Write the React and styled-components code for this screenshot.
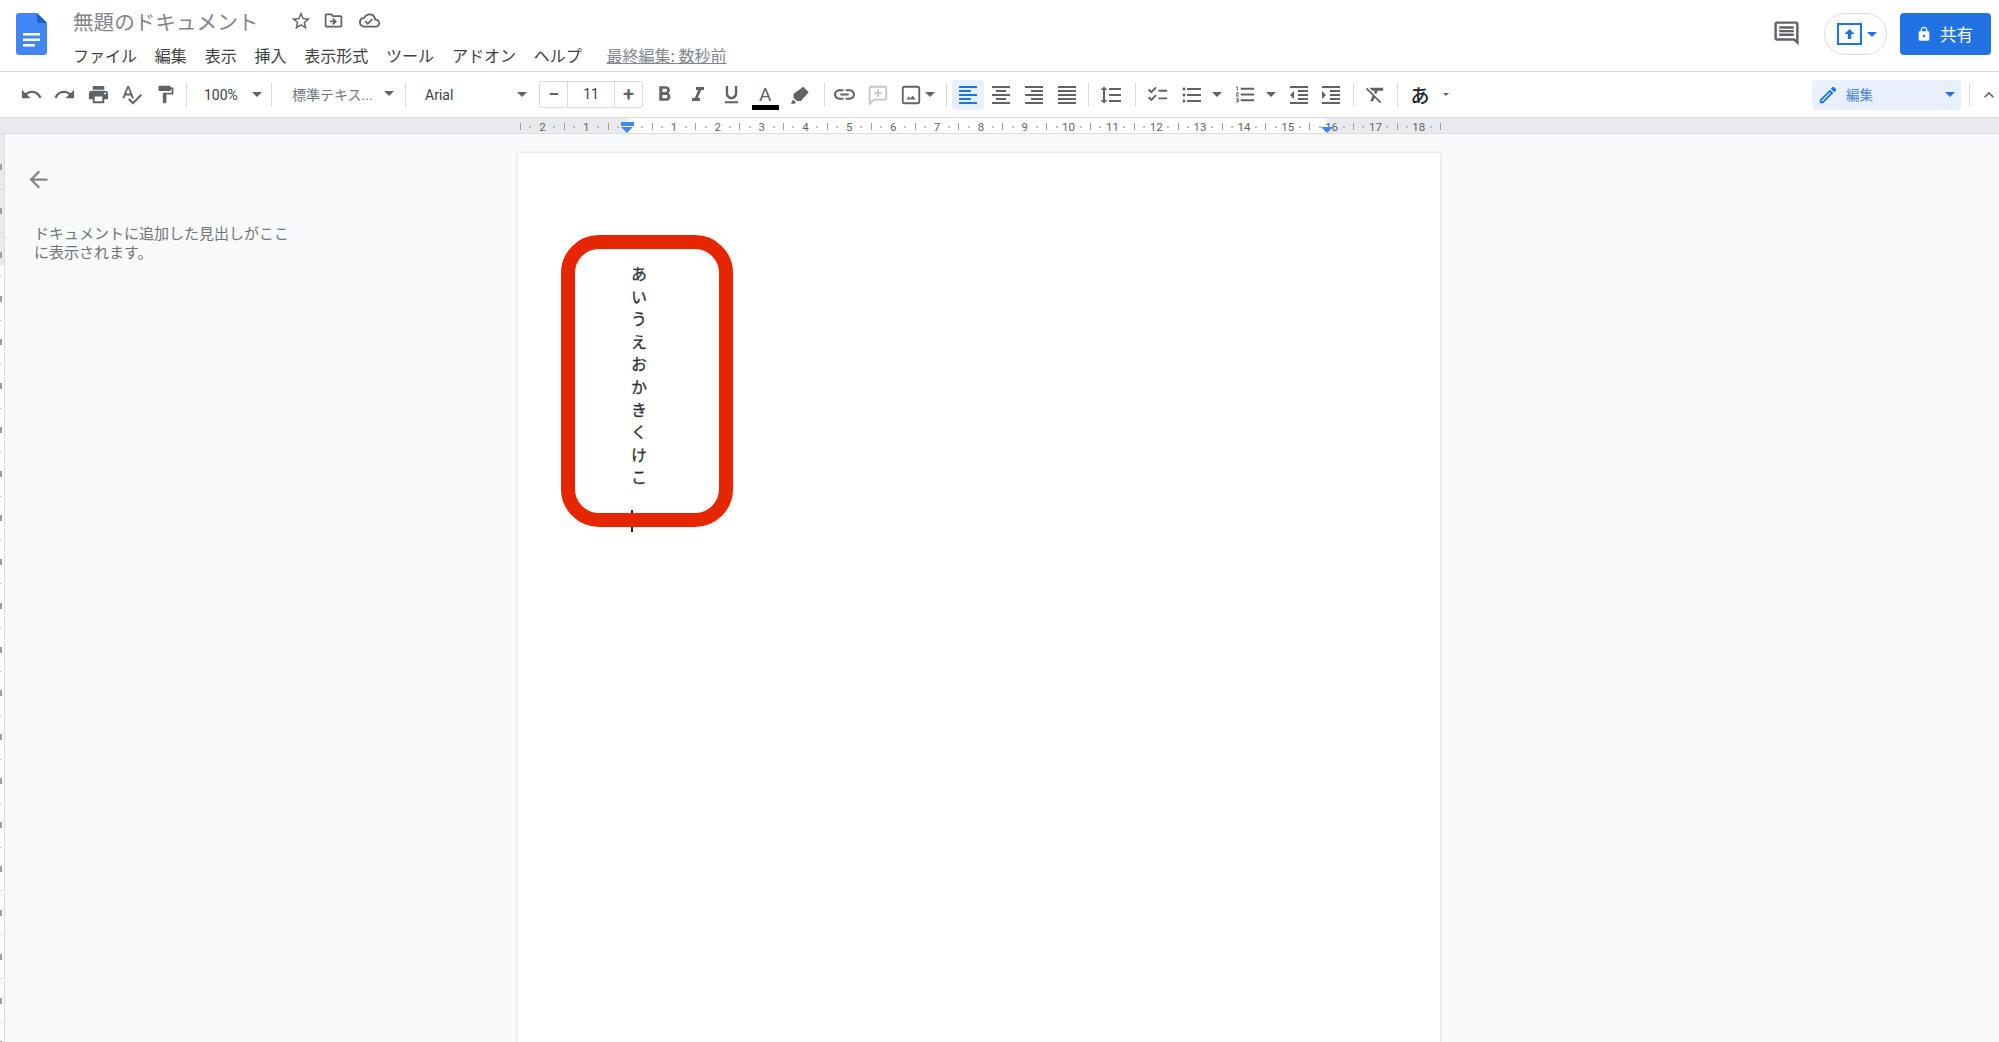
import styled, { createGlobalStyle } from "styled-components";
import {
  MdArrowBack,
  MdChecklist,
  MdExpandLess,
  MdFormatAlignCenter,
  MdFormatAlignJustify,
  MdFormatAlignLeft,
  MdFormatAlignRight,
  MdFormatBold,
  MdFormatClear,
  MdFormatIndentDecrease,
  MdFormatIndentIncrease,
  MdFormatItalic,
  MdFormatLineSpacing,
  MdFormatListBulleted,
  MdFormatListNumbered,
  MdFormatPaint,
  MdFormatUnderlined,
  MdLink,
  MdLock,
  MdOutlineCloudDone,
  MdOutlineComment,
  MdOutlineDriveFileMove,
  MdOutlineEdit,
  MdPrint,
  MdRedo,
  MdSpellcheck,
  MdStarBorder,
  MdUndo,
} from "react-icons/md";

const CJK = `"Noto Sans CJK JP", "Noto Sans", sans-serif`;
const menuItems = ["ファイル", "編集", "表示", "挿入", "表示形式", "ツール", "アドオン", "ヘルプ"];
const kana = "あいうえおかきくけこ";
const cells = Array.from({ length: 21 }, (_, i) => i - 2);
const sideTicks = Array.from({ length: 42 }, (_, i) => i);

export default function App() {
  return (
    <Screen>
      <GlobalStyle />
      <Header>
        <DocsLogo viewBox="0 0 31 42">
          <path d="M3 0h18l10 10v29a3 3 0 0 1-3 3H3a3 3 0 0 1-3-3V3a3 3 0 0 1 3-3z" fill="#4285f4" />
          <path d="M21 0l10 10h-7.500a2.500 2.500 0 0 1-2.500-2.500z" fill="#1a5fc8" />
          <path d="M7 20h17v2.500H7zM7 25.500h17V28H7zM7 31h12v2.500H7z" fill="#fff" />
        </DocsLogo>
        <TitleColumn>
          <TitleRow>
            <Title>無題のドキュメント</Title>
            <TitleIcon $w={33} $ml={26}><MdStarBorder size={22} /></TitleIcon>
            <TitleIcon $w={33}><MdOutlineDriveFileMove size={21} /></TitleIcon>
            <TitleIcon $w={38}><MdOutlineCloudDone size={21} /></TitleIcon>
          </TitleRow>
          <MenuRow>
            {menuItems.map((item) => (
              <MenuItem key={item}>{item}</MenuItem>
            ))}
            <LastEdit>最終編集: 数秒前</LastEdit>
          </MenuRow>
        </TitleColumn>
        <HeaderActions>
          <CommentIcon><MdOutlineComment size={29} /></CommentIcon>
          <PresentPill>
            <svg width="28" height="24" viewBox="0 0 28 24">
              <rect x="2" y="2" width="23" height="20" fill="none" stroke="#1a73e8" strokeWidth="2" />
              <path d="M13.500 7l5 5h-3.300v5h-3.400v-5H8.500z" fill="#1a73e8" />
            </svg>
            <Caret $color="#1a73e8" />
          </PresentPill>
          <ShareButton>
            <MdLock size={16} />
            共有
          </ShareButton>
        </HeaderActions>
      </Header>

      <Toolbar>
        <Tool><MdUndo size={23} /></Tool>
        <Tool><MdRedo size={23} /></Tool>
        <Tool><MdPrint size={23} /></Tool>
        <Tool><MdSpellcheck size={23} /></Tool>
        <Tool><MdFormatPaint size={21} /></Tool>
        <Sep $ml={4} />
        <Select $w={84} $pl={17} $pr={9}>100%<Caret /></Select>
        <Sep />
        <Select $w={133} $pl={20} $pr={11} $light>標準テキス...<Caret /></Select>
        <Sep />
        <Select $w={133} $pl={19} $pr={12}>Arial<Caret /></Select>
        <SizeBox>
          <SizeStep>−</SizeStep>
          <SizeValue>11</SizeValue>
          <SizeStep>+</SizeStep>
        </SizeBox>
        <Tool $w={33.5} $ml={5}><MdFormatBold size={25} /></Tool>
        <Tool $w={33.5}><MdFormatItalic size={24} /></Tool>
        <Tool $w={33.5}><MdFormatUnderlined size={23} /></Tool>
        <Tool $w={33.5}>
          <FontColor>A<ColorBar /></FontColor>
        </Tool>
        <Tool $w={36}>
          <svg width="22" height="22" viewBox="0 0 24 24" fill="currentColor">
            <path d="M15.500 3l6 6-8.500 9.500H8.500L5 15v-4.500z" />
            <path d="M4.500 17l3 3-1.500 1.500H2z" />
          </svg>
        </Tool>
        <Sep $ml={6} />
        <Tool $w={33} $ml={3}><MdLink size={25} /></Tool>
        <Tool $w={33} $faded>
          <svg width="22" height="22" viewBox="0 0 24 24" fill="none" stroke="currentColor" strokeWidth="2">
            <path d="M4 3h16a1 1 0 0 1 1 1v12a1 1 0 0 1-1 1H8l-5 4.500V4a1 1 0 0 1 1-1z" />
            <path d="M12 6v8M8 10h8" />
          </svg>
        </Tool>
        <Tool $w={33}>
          <svg width="22" height="22" viewBox="0 0 24 24">
            <rect x="3" y="3" width="18" height="18" rx="2" fill="none" stroke="currentColor" strokeWidth="2" />
            <path d="M7 17l2.500-3.500 2 2.500 2-3.500 3.500 4.500z" fill="currentColor" />
          </svg>
        </Tool>
        <Tool $w={6}><Caret /></Tool>
        <Sep $ml={13} />
        <Tool $w={32} $ml={5} $active><MdFormatAlignLeft size={24} /></Tool>
        <Tool $w={33}><MdFormatAlignCenter size={24} /></Tool>
        <Tool $w={33}><MdFormatAlignRight size={24} /></Tool>
        <Tool $w={33}><MdFormatAlignJustify size={24} /></Tool>
        <Sep $ml={5} />
        <Tool $w={44}><MdFormatLineSpacing size={24} /></Tool>
        <Sep $ml={2} />
        <Tool $w={42}><MdChecklist size={23} /></Tool>
        <Tool $w={28}><MdFormatListBulleted size={24} /></Tool>
        <Tool $w={22}><Caret /></Tool>
        <Tool $w={34}><MdFormatListNumbered size={23} /></Tool>
        <Tool $w={18}><Caret /></Tool>
        <Tool $w={38}><MdFormatIndentDecrease size={24} /></Tool>
        <Tool $w={26}><MdFormatIndentIncrease size={24} /></Tool>
        <Sep $ml={9} />
        <Tool $w={42}><MdFormatClear size={23} /></Tool>
        <Sep $ml={1} />
        <InputMode>あ</InputMode>
        <Tool $w={8}><Caret $small /></Tool>
        <EditMode>
          <MdOutlineEdit size={22} />
          <EditLabel>編集</EditLabel>
          <Caret $color="#1a73e8" />
        </EditMode>
        <Sep $ml={8} />
        <Collapse><MdExpandLess size={28} /></Collapse>
      </Toolbar>

      <Ruler>
        {cells.map((n) => (
          <RulerCell key={n}>
            <RulerDot />
            <RulerNumber>{n === 0 ? "" : Math.abs(n)}</RulerNumber>
            <RulerDot />
            {n === 0 && <IndentMarker />}
            {n === 16 && <RightMarker />}
          </RulerCell>
        ))}
      </Ruler>

      <Workspace>
        <SideRuler>
          {sideTicks.map((i) => (
            <SideCell key={i}>
              <SideTick $major={i % 2 === 0} />
            </SideCell>
          ))}
        </SideRuler>
        <Outline>
          <BackArrow><MdArrowBack size={27} /></BackArrow>
          <OutlineText>
            ドキュメントに追加した見出しがここ
            <br />
            に表示されます。
          </OutlineText>
        </Outline>
        <Page>
          <VerticalText>{kana}</VerticalText>
          <TextCursor />
          <RedFrame />
        </Page>
      </Workspace>
    </Screen>
  );
}

const GlobalStyle = createGlobalStyle`
  html, body {
    margin: 0;
    padding: 0;
    background: #fff;
  }
`;
const Screen = styled.div`
  width: 1999px;
  height: 1042px;
  overflow: hidden;
  display: flex;
  flex-direction: column;
  font-family: ${CJK};
  color: #3c4043;
`;
const Header = styled.header`
  height: 58px;
  flex: none;
  display: flex;
  padding: 13px 8px 0 16px;
  background: #fff;
  border-bottom: 1px solid #dadce0;
`;
const DocsLogo = styled.svg`
  width: 31px;
  height: 42px;
  flex: none;
`;
const TitleColumn = styled.div`
  margin-left: 26px;
  margin-top: -13px;
  display: flex;
  flex-direction: column;
`;
const TitleRow = styled.div`
  height: 41px;
  display: flex;
  align-items: center;
`;
const Title = styled.div`
  font-size: 20.600px;
  color: #80868b;
  white-space: nowrap;
`;
const TitleIcon = styled.div`
  width: ${(p) => p.$w}px;
  margin-left: ${(p) => p.$ml || 0}px;
  display: flex;
  justify-content: center;
  color: #5f6368;
`;
const MenuRow = styled.nav`
  display: flex;
  align-items: center;
  gap: 17.800px;
  height: 27px;
`;
const MenuItem = styled.span`
  font-size: 16px;
  color: #3c4043;
  white-space: nowrap;
`;
const LastEdit = styled.span`
  font-size: 16px;
  color: #80868b;
  text-decoration: underline;
  white-space: nowrap;
  margin-left: 7px;
`;
const HeaderActions = styled.div`
  margin-left: auto;
  display: flex;
  align-items: flex-start;
`;
const CommentIcon = styled.div`
  margin-top: 6px;
  margin-right: 23px;
  color: #5f6368;
  display: flex;
`;
const PresentPill = styled.div`
  width: 63px;
  height: 42px;
  box-sizing: border-box;
  border: 1px solid #dadce0;
  border-radius: 21px;
  display: flex;
  align-items: center;
  justify-content: center;
  gap: 3px;
  padding-left: 2px;
  margin-right: 13px;
`;
const ShareButton = styled.button`
  width: 91px;
  height: 42px;
  border: none;
  border-radius: 4px;
  background: #2173e4;
  color: #fff;
  font-family: ${CJK};
  font-size: 16.500px;
  display: flex;
  align-items: center;
  justify-content: center;
  gap: 8px;
  padding: 0 2px 0 0;
`;
const Toolbar = styled.div`
  height: 45px;
  flex: none;
  display: flex;
  align-items: center;
  padding-left: 14.500px;
  background: #fff;
`;
const Tool = styled.div`
  width: ${(p) => p.$w || 33.5}px;
  height: 30px;
  flex: none;
  margin-left: ${(p) => p.$ml || 0}px;
  display: flex;
  align-items: center;
  justify-content: center;
  border-radius: 3px;
  color: ${(p) => (p.$active ? "#1a73e8" : p.$faded ? "#c4c7c9" : "#5f6368")};
  background: ${(p) => (p.$active ? "#e8f0fe" : "transparent")};
`;
const Sep = styled.div`
  width: 1px;
  height: 24px;
  flex: none;
  margin-left: ${(p) => p.$ml || 0}px;
  background: #dadce0;
`;
const Select = styled.div`
  width: ${(p) => p.$w}px;
  height: 24px;
  flex: none;
  box-sizing: border-box;
  padding: 0 ${(p) => p.$pr}px ${(p) => (p.$light ? 2 : 0)}px ${(p) => p.$pl}px;
  display: flex;
  align-items: center;
  justify-content: space-between;
  font-family: "Roboto", ${CJK};
  font-size: 14px;
  color: ${(p) => (p.$light ? "#70757a" : "#3c4043")};
  white-space: nowrap;
`;
const Caret = styled.span`
  display: inline-block;
  flex: none;
  width: 0;
  height: 0;
  border-left: ${(p) => (p.$small ? 3 : 5)}px solid transparent;
  border-right: ${(p) => (p.$small ? 3 : 5)}px solid transparent;
  border-top: ${(p) => (p.$small ? 3 : 5)}px solid ${(p) => p.$color || "#5f6368"};
`;
const SizeBox = styled.div`
  width: 104px;
  height: 27px;
  flex: none;
  box-sizing: border-box;
  border: 1px solid #dadce0;
  border-radius: 2px;
  display: flex;
  align-items: center;
  font-family: "Roboto", sans-serif;
`;
const SizeStep = styled.div`
  width: 27px;
  text-align: center;
  font-size: 20px;
  font-weight: 500;
  color: #5f6368;
  line-height: 25px;
`;
const SizeValue = styled.div`
  flex: 1;
  height: 100%;
  border-left: 1px solid #dadce0;
  border-right: 1px solid #dadce0;
  text-align: center;
  font-size: 14px;
  line-height: 25px;
  color: #3c4043;
`;
const FontColor = styled.div`
  display: flex;
  flex-direction: column;
  align-items: center;
  font-family: "Roboto", sans-serif;
  font-size: 19px;
  line-height: 21px;
  color: #5f6368;
  margin-top: 4px;
`;
const ColorBar = styled.div`
  width: 27px;
  height: 5px;
  background: #000;
`;
const InputMode = styled.div`
  width: 44px;
  flex: none;
  text-align: center;
  font-size: 19px;
  font-weight: 500;
  color: #202124;
`;
const EditMode = styled.div`
  margin-left: auto;
  width: 149px;
  height: 30px;
  flex: none;
  box-sizing: border-box;
  padding: 0 6px 0 5px;
  display: flex;
  align-items: center;
  border-radius: 4px;
  background: #e8f0fe;
  color: #1a73e8;
`;
const EditLabel = styled.span`
  font-size: 13.500px;
  margin: -2px auto 0 7px;
  color: #4a86d8;
`;
const Collapse = styled.div`
  width: 20px;
  flex: none;
  margin-left: 9px;
  display: flex;
  justify-content: center;
  color: #5f6368;
`;
const Ruler = styled.div`
  height: 17px;
  flex: none;
  box-sizing: border-box;
  padding-left: 520px;
  display: flex;
  border-top: 1px solid #dadce0;
  border-bottom: 1px solid #dadce0;
  background: linear-gradient(to right, #e8eaed 628px, #fff 628px, #fff 1327px, #e8eaed 1327px);
`;
const RulerCell = styled.div`
  position: relative;
  width: 43.850px;
  flex: none;
  display: flex;
  align-items: center;
  justify-content: center;
  gap: 3px;
  border-left: 1px solid #9aa0a6;
  box-sizing: border-box;
  height: 7px;
  margin-top: 5px;
  &:last-of-type {
    border-right: 1px solid #9aa0a6;
  }
`;
const RulerDot = styled.span`
  width: 2px;
  height: 2px;
  background: #bdc1c6;
`;
const RulerNumber = styled.span`
  width: 16px;
  text-align: center;
  font-family: "Roboto", sans-serif;
  font-size: 11.500px;
  color: #5f6368;
`;
const IndentMarker = styled.div`
  position: absolute;
  left: 12px;
  top: -1px;
  width: 13px;
  height: 4px;
  background: #4285f4;
  &::after {
    content: "";
    position: absolute;
    left: 0;
    top: 5px;
    border-left: 6.500px solid transparent;
    border-right: 6.500px solid transparent;
    border-top: 6px solid #4285f4;
  }
`;
const RightMarker = styled.div`
  position: absolute;
  left: 10.500px;
  top: 4px;
  border-left: 6.500px solid transparent;
  border-right: 6.500px solid transparent;
  border-top: 6px solid #4285f4;
`;
const Workspace = styled.main`
  flex: 1;
  display: flex;
  min-height: 0;
  background: #f8f9fa;
`;
const SideRuler = styled.div`
  width: 5px;
  flex: none;
  overflow: hidden;
  padding-top: 22px;
  box-sizing: border-box;
  border-right: 1px solid #dadce0;
  background: linear-gradient(to bottom, #e8eaed 131px, #fff 131px);
  display: flex;
  flex-direction: column;
`;
const SideCell = styled.div`
  height: 21.950px;
  flex: none;
  display: flex;
  align-items: center;
`;
const SideTick = styled.span`
  width: 2px;
  height: ${(p) => (p.$major ? 6 : 1)}px;
  background: ${(p) => (p.$major ? "#9aa0a6" : "#d0d3d6")};
`;
const Outline = styled.aside`
  width: 513px;
  flex: none;
  box-sizing: border-box;
  padding: 32px 0 0 20px;
`;
const BackArrow = styled.div`
  display: flex;
  color: #80868b;
  height: 27px;
`;
const OutlineText = styled.p`
  margin: 30px 0 0 9px;
  font-size: 15px;
  line-height: 19px;
  color: #70757a;
  white-space: nowrap;
`;
const Page = styled.section`
  position: relative;
  width: 922px;
  height: 1000px;
  flex: none;
  margin-top: 19px;
  box-sizing: border-box;
  padding: 113px 0 0 112px;
  background: #fff;
  box-shadow: 0 0 3px rgba(60, 64, 67, 0.2);
`;
const VerticalText = styled.div`
  writing-mode: vertical-rl;
  font-size: 16px;
  letter-spacing: 6.600px;
  line-height: 18px;
  color: #303134;
  -webkit-text-stroke: 0.3px #303134;
`;
const TextCursor = styled.div`
  position: absolute;
  left: 113px;
  top: 357px;
  width: 2px;
  height: 22px;
  background: #202124;
`;
const RedFrame = styled.div`
  position: absolute;
  left: 43px;
  top: 82px;
  width: 172px;
  height: 292px;
  box-sizing: border-box;
  border: 14px solid #e52600;
  border-radius: 38px;
`;
